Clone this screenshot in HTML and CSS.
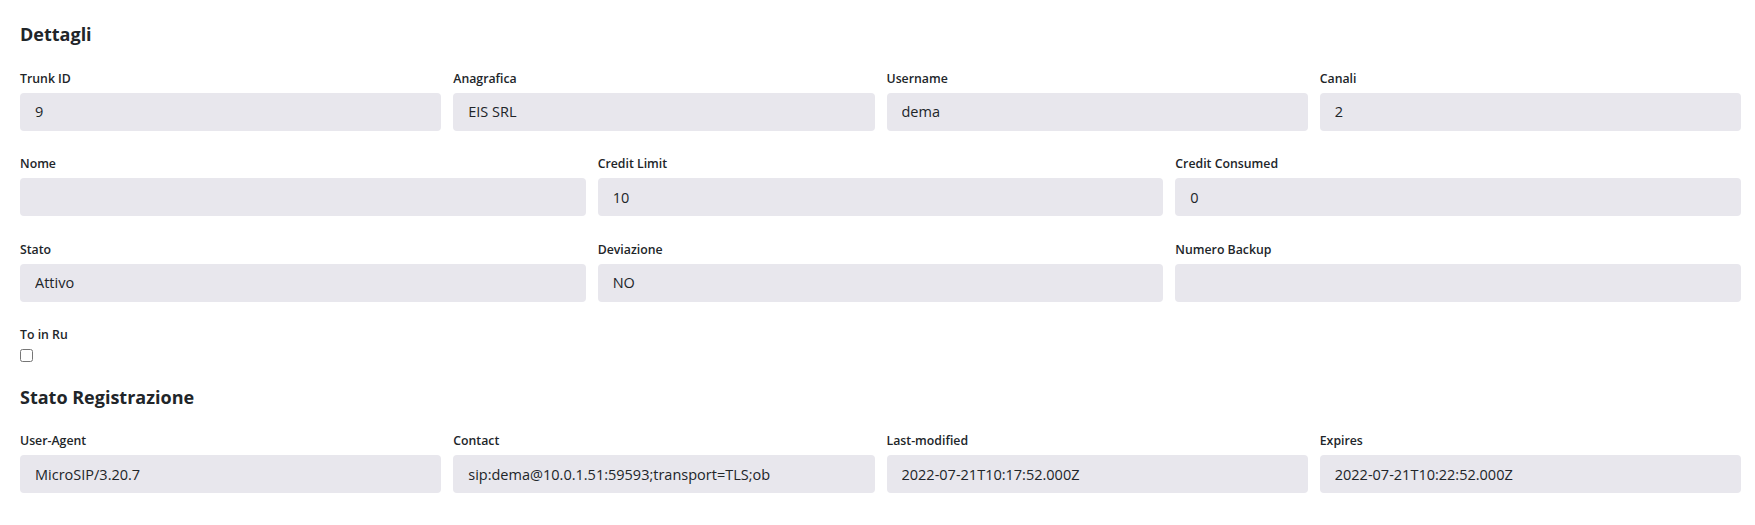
FILE: index.html
```html
<!DOCTYPE html>
<html lang="it">
<head>
  <meta charset="UTF-8">
  <meta name="viewport" content="width=device-width, initial-scale=1.0">
  <title>Dettagli Trunk</title>
  <link rel="stylesheet" href="styles.css">
</head>
<body>
  <div class="container">
    <h3>Dettagli</h3>

    <div class="row cols-4">
      <div class="field">
        <label>Trunk ID</label>
        <input type="text" readonly value="9">
      </div>
      <div class="field">
        <label>Anagrafica</label>
        <input type="text" readonly value="EIS SRL">
      </div>
      <div class="field">
        <label>Username</label>
        <input type="text" readonly value="dema">
      </div>
      <div class="field">
        <label>Canali</label>
        <input type="text" readonly value="2">
      </div>
    </div>

    <div class="row cols-3">
      <div class="field">
        <label>Nome</label>
        <input type="text" readonly value="">
      </div>
      <div class="field">
        <label>Credit Limit</label>
        <input type="text" readonly value="10">
      </div>
      <div class="field">
        <label>Credit Consumed</label>
        <input type="text" readonly value="0">
      </div>
    </div>

    <div class="row cols-3">
      <div class="field">
        <label>Stato</label>
        <input type="text" readonly value="Attivo">
      </div>
      <div class="field">
        <label>Deviazione</label>
        <input type="text" readonly value="NO">
      </div>
      <div class="field">
        <label>Numero Backup</label>
        <input type="text" readonly value="">
      </div>
    </div>

    <div class="row">
      <div class="field">
        <label for="toInRu">To in Ru</label>
        <input type="checkbox" id="toInRu" class="check">
      </div>
    </div>

    <h3>Stato Registrazione</h3>

    <div class="row cols-4">
      <div class="field">
        <label>User-Agent</label>
        <input type="text" readonly value="MicroSIP/3.20.7">
      </div>
      <div class="field">
        <label>Contact</label>
        <input type="text" readonly value="sip:dema@10.0.1.51:59593;transport=TLS;ob">
      </div>
      <div class="field">
        <label>Last-modified</label>
        <input type="text" readonly value="2022-07-21T10:17:52.000Z">
      </div>
      <div class="field">
        <label>Expires</label>
        <input type="text" readonly value="2022-07-21T10:22:52.000Z">
      </div>
    </div>
  </div>
</body>
</html>
```

FILE: styles.css
```css
html, body {
  margin: 0;
  padding: 0;
  background: #fff;
  color: #212529;
  font-family: 'Open Sans', 'Noto Sans', sans-serif;
}

.container {
  padding: 24px 14px 0 20px;
  box-sizing: border-box;
}

h3 {
  margin: 0 0 24px 0;
  font-size: 18px;
  line-height: 1.2;
  font-weight: 700;
  color: #212529;
}

.row {
  display: grid;
  column-gap: 12px;
  margin-bottom: 24.5px;
}

.cols-4 {
  grid-template-columns: repeat(4, 1fr);
}

.cols-3 {
  grid-template-columns: repeat(3, 1fr);
}

.field {
  display: flex;
  flex-direction: column;
  align-items: stretch;
}

label {
  display: block;
  font-size: 12.3px;
  line-height: 18px;
  font-weight: 600;
  color: #212529;
  margin-bottom: 5px;
}

input[type="text"] {
  height: 38px;
  padding: 0 15px;
  border: none;
  border-radius: 4px;
  background: #e8e7ed;
  color: #212529;
  font-size: 14.5px;
  font-family: 'Open Sans', 'Noto Sans', sans-serif;
  box-sizing: border-box;
  width: 100%;
  outline: none;
}

.check {
  width: 13px;
  height: 13px;
  margin: 0;
  align-self: flex-start;
}
```
